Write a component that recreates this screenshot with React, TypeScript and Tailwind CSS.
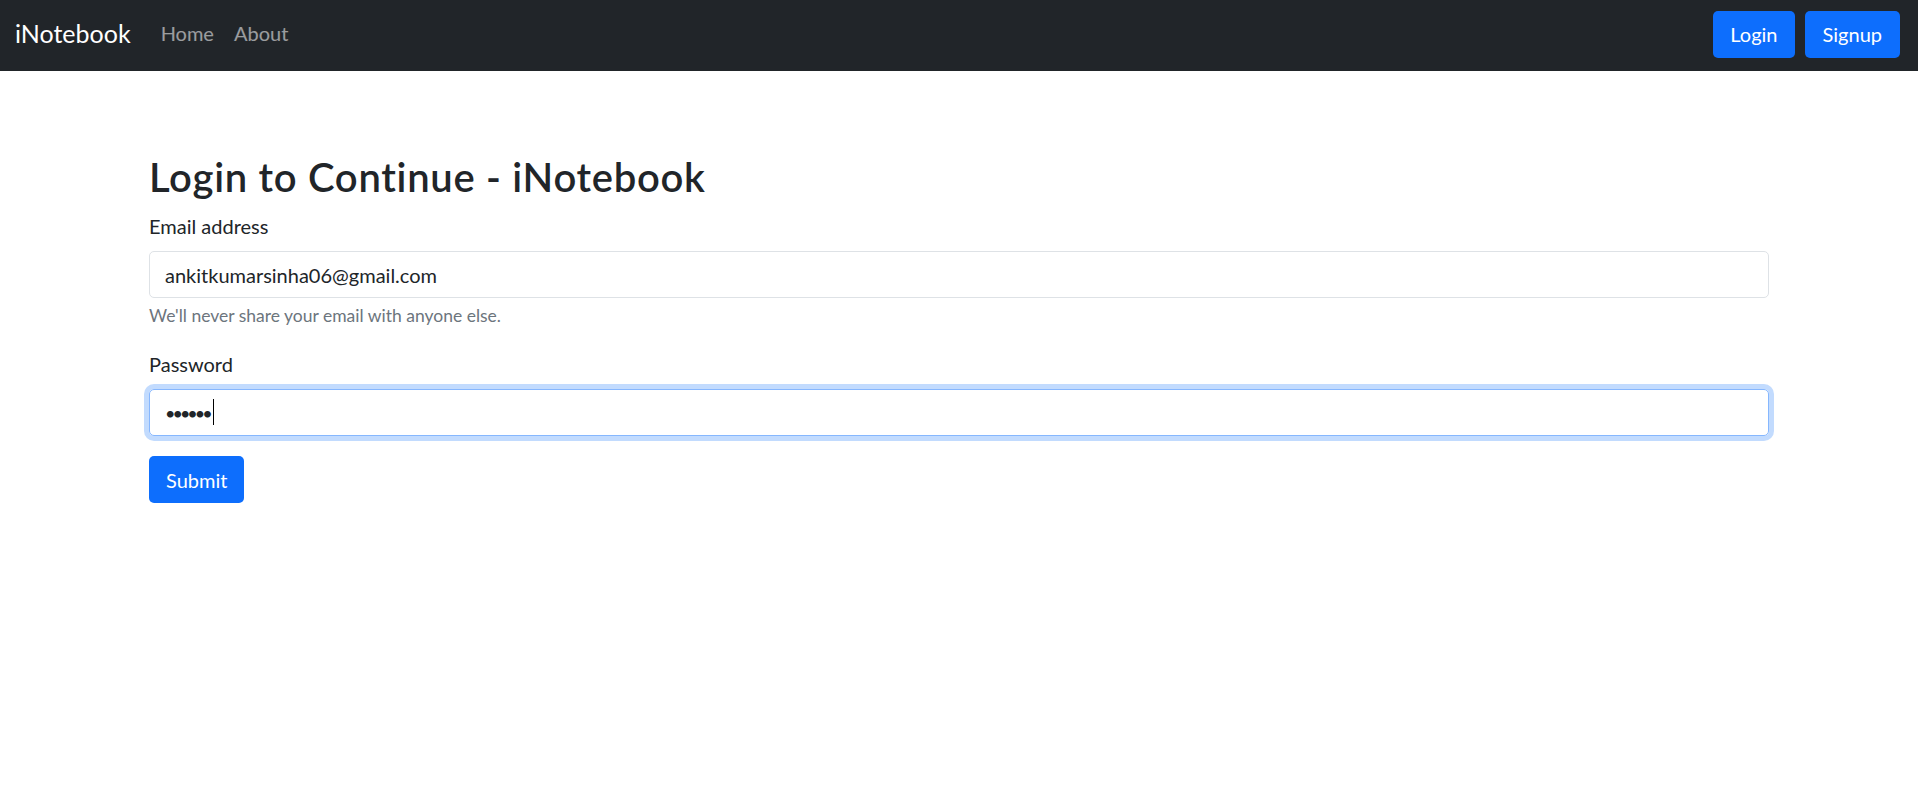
export default function App() {
  return (
    <div className="min-h-screen bg-white font-['Segoe_UI',Lato,sans-serif] text-[#212529]">
      <nav className="flex h-[71px] items-center bg-[#212529] pb-[3px] pl-[15px] pr-[13px]">
        <a href="#" className="mb-[2px] mr-[20px] text-[25px] leading-[37px] text-white">
          iNotebook
        </a>
        <ul className="mb-[2px] flex">
          <li>
            <a href="#" className="block px-[10px] text-[20px] leading-[30px] text-white/55">
              Home
            </a>
          </li>
          <li>
            <a href="#" className="block px-[10px] text-[20px] leading-[30px] text-white/55">
              About
            </a>
          </li>
        </ul>
        <div className="ml-auto flex">
          <button className="mx-[5px] h-[47px] rounded-[5px] bg-[#0d6efd] px-[17px] text-[20px] text-white">
            Login
          </button>
          <button className="mx-[5px] h-[47px] rounded-[5px] bg-[#0d6efd] px-[18px] text-[20px] text-white">
            Signup
          </button>
        </div>
      </nav>

      <div className="mx-auto w-[1620px] pt-[82px]">
        <h2 className="mb-[10px] text-[40px] font-semibold leading-[48px] tracking-[0.7px]">
          Login to Continue - iNotebook
        </h2>
        <form onSubmit={e => e.preventDefault()}>
          <div className="mb-[20px]">
            <label htmlFor="email" className="mb-[10px] block text-[20px] leading-[30px]">
              Email address
            </label>
            <input
              id="email"
              type="email"
              defaultValue="ankitkumarsinha06@gmail.com"
              className="block h-[47px] w-full rounded-[5px] border border-[#dee2e6] px-[15px] text-[20px] text-[#212529] outline-none"
            />
            <div className="mt-[5px] text-[17.5px] leading-[26px] text-[#6c757d]">
              We'll never share your email with anyone else.
            </div>
          </div>
          <div className="mb-[20px]">
            <label htmlFor="password" className="mb-[10px] block text-[20px] leading-[30px]">
              Password
            </label>
            <div className="relative">
              <input
                id="password"
                type="password"
                defaultValue="123456"
                className="block h-[47px] w-full rounded-[5px] border border-[#86b7fe] px-[15px] text-[18px] tracking-[-3px] text-[#212529] shadow-[0_0_0_5px_rgba(13,110,253,0.25)] outline-none"
              />
              {/* caret */}
              <span className="pointer-events-none absolute left-[64px] top-[10px] h-[26px] w-px bg-black" />
            </div>
          </div>
          <button
            type="submit"
            className="h-[47px] rounded-[5px] bg-[#0d6efd] px-[17px] text-[20px] text-white"
          >
            Submit
          </button>
        </form>
      </div>
    </div>
  );
}
